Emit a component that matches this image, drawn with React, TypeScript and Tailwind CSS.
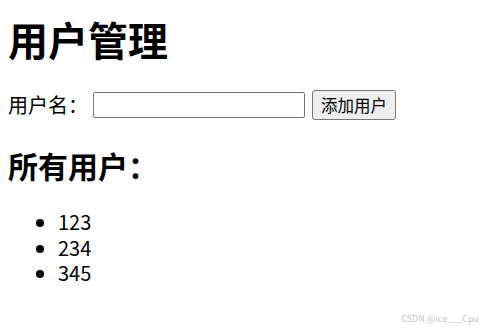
import React, { useState } from 'react';

const App = () => {
  const [name, setName] = useState('');
  const [users, setUsers] = useState<string[]>(['123', '234', '345']);

  const addUser = () => {
    if (!name.trim()) return;
    setUsers([...users, name.trim()]);
    setName('');
  };

  return (
    <div
      className="relative min-h-[331px] bg-white px-2 text-black"
      style={{ fontFamily: '"Noto Sans CJK SC", "Noto Sans", sans-serif' }}
    >
      <h1 className="pt-[15px] text-[40px] font-bold leading-[48px]">用户管理</h1>

      {/* Add user form */}
      <div className="mt-[27px] flex h-[30px] items-center">
        <label className="text-[20px] leading-[26px]">用户名：</label>
        <input
          type="text"
          value={name}
          onChange={(e) => setName(e.target.value)}
          className="ml-[5px] h-[26px] w-[212px] rounded-[2px] border border-[#767676] bg-white px-1 text-[16px] outline-none"
        />
        <button
          onClick={addUser}
          className="ml-[7px] h-[30px] w-[84px] rounded-[3px] border border-[#767676] bg-[#efefef] text-[16.5px] leading-[28px]"
        >
          添加用户
        </button>
      </div>

      <h2 className="mt-[27px] text-[30px] font-bold leading-[36px]">所有用户：</h2>

      <ul className="mt-[26px] list-disc pl-[50px] text-[20px] leading-[25.5px]">
        {users.map((u) => (
          <li key={u}>{u}</li>
        ))}
      </ul>

      {/* watermark */}
      <span className="absolute right-[4px] bottom-[6px] text-[9px] text-[#c8c8c8]">CSDN @ice___Cpu</span>
    </div>
  );
};

export default App;
